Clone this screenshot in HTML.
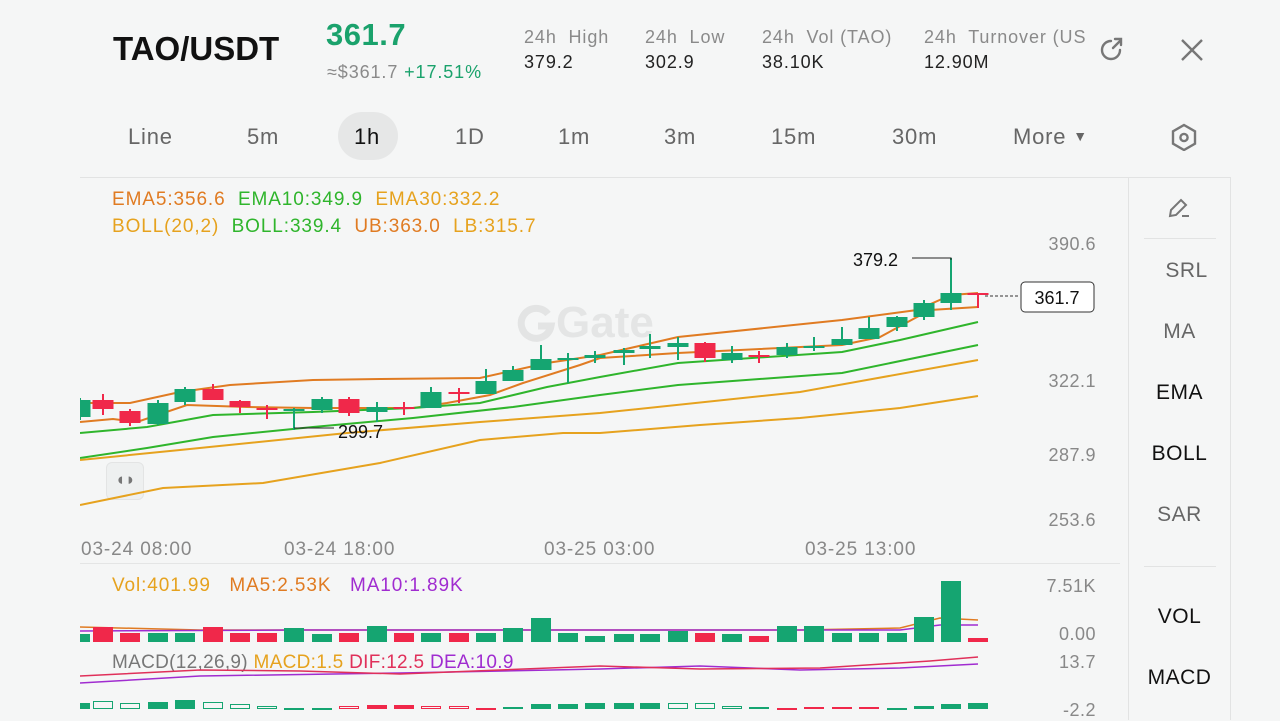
<!DOCTYPE html>
<html><head><meta charset="utf-8"><style>
body{margin:0;width:1280px;height:720px;background:#f5f6f6;font-family:"Liberation Sans",sans-serif;overflow:hidden;position:relative}
.a{position:absolute;white-space:nowrap}
.g{color:#8a8a8a}
.tab{position:absolute;top:124px;font-size:22px;color:#666;letter-spacing:0.8px}
.rl{position:absolute;left:1128px;width:103px;text-align:center;font-size:21px;color:#666;letter-spacing:0.5px}
.ax{position:absolute;right:184px;font-size:18px;color:#888;text-align:right;letter-spacing:0.5px}
.ls{letter-spacing:0.9px}
</style></head><body>
<div class="a" style="left:113px;top:30px;font-size:33px;font-weight:bold;color:#111">TAO/USDT</div>
<div class="a" style="left:326px;top:17px;font-size:31px;font-weight:bold;color:#1aa26c;letter-spacing:0.5px">361.7</div>
<div class="a g ls" style="left:327px;top:62px;font-size:18px">≈$361.7 <span style="color:#1aa26c">+17.51%</span></div>
<div class="a g ls" style="left:524px;top:27px;font-size:18px">24h&nbsp; High</div><div class="a ls" style="left:524px;top:52px;font-size:18px;color:#222">379.2</div>
<div class="a g ls" style="left:645px;top:27px;font-size:18px">24h&nbsp; Low</div><div class="a ls" style="left:645px;top:52px;font-size:18px;color:#222">302.9</div>
<div class="a g ls" style="left:762px;top:27px;font-size:18px">24h&nbsp; Vol (TAO)</div><div class="a ls" style="left:762px;top:52px;font-size:18px;color:#222">38.10K</div>
<div class="a g ls" style="left:924px;top:27px;font-size:18px;width:162px;overflow:hidden">24h&nbsp; Turnover (USDT)</div><div class="a ls" style="left:924px;top:52px;font-size:18px;color:#222">12.90M</div>
<svg class="a" style="left:1098px;top:35px" width="28" height="28" viewBox="0 0 28 28" fill="none" stroke="#777" stroke-width="2.4" stroke-linecap="round"><path d="M22 15a9 9 0 1 1-9-9"/><path d="M15 13L23 5M17 4h6v6"/></svg>
<svg class="a" style="left:1180px;top:38px" width="24" height="24" stroke="#777" stroke-width="2.4"><path d="M2 2L22 22M22 2L2 22"/></svg>

<div class="a" style="left:338px;top:112px;width:60px;height:48px;border-radius:24px;background:#e6e7e7"></div>
<div class="tab" style="left:128px">Line</div><div class="tab" style="left:247px">5m</div><div class="tab" style="left:354px;color:#111">1h</div><div class="tab" style="left:455px">1D</div><div class="tab" style="left:558px">1m</div><div class="tab" style="left:664px">3m</div><div class="tab" style="left:771px">15m</div><div class="tab" style="left:892px">30m</div><div class="tab" style="left:1013px">More <span style="font-size:14px;position:relative;top:-3px">▼</span></div>
<svg class="a" style="left:1170px;top:123px" width="28" height="28" fill="none" stroke="#777" stroke-width="2.4"><path d="M14 2L25 8.3V20.7L14 27L3 20.7V8.3Z"/><circle cx="14" cy="14.5" r="3.6"/></svg>

<div class="a" style="left:80px;top:177px;width:1150px;height:1px;background:#e2e3e3"></div>
<div class="a" style="left:1128px;top:177px;width:1px;height:543px;background:#e2e3e3"></div>
<div class="a" style="left:1230px;top:177px;width:1px;height:543px;background:#e2e3e3"></div>
<div class="a" style="left:1144px;top:238px;width:72px;height:1px;background:#e2e3e3"></div>
<div class="a" style="left:1144px;top:566px;width:72px;height:1px;background:#e2e3e3"></div>
<div class="a" style="left:80px;top:563px;width:1040px;height:1px;background:#e4e5e5"></div>
<svg class="a" style="left:1167px;top:196px" width="26" height="24" fill="none" stroke="#777" stroke-width="2"><path d="M3 20L4 14L14 4L19 9L9 19Z M15 20h7"/></svg>
<div class="rl" style="top:259px;color:#666;left:1135px">SRL</div>
<div class="rl" style="top:320px">MA</div>
<div class="rl" style="top:381px;color:#111">EMA</div>
<div class="rl" style="top:442px;color:#111">BOLL</div>
<div class="rl" style="top:503px">SAR</div>
<div class="rl" style="top:605px;color:#111">VOL</div>
<div class="rl" style="top:666px;color:#111">MACD</div>

<div class="a ls" style="left:112px;top:189px;font-size:19px;color:#e07b22">EMA5:356.6 &nbsp;<span style="color:#2fb52c">EMA10:349.9</span> &nbsp;<span style="color:#e6a21e">EMA30:332.2</span></div>
<div class="a ls" style="left:112px;top:216px;font-size:19px;color:#e6a21e">BOLL(20,2) &nbsp;<span style="color:#2fb52c">BOLL:339.4</span> &nbsp;<span style="color:#e07b22">UB:363.0</span> &nbsp;<span style="color:#e6a21e">LB:315.7</span></div>
<div class="ax" style="top:234px">390.6</div><div class="ax" style="top:371px">322.1</div><div class="ax" style="top:445px">287.9</div><div class="ax" style="top:510px">253.6</div>
<div class="ax" style="top:576px">7.51K</div><div class="ax" style="top:624px">0.00</div><div class="ax" style="top:652px">13.7</div><div class="ax" style="top:700px">-2.2</div>
<div class="a ls" style="left:81px;top:539px;font-size:19px;color:#888">03-24 08:00</div>
<div class="a ls" style="left:284px;top:539px;font-size:19px;color:#888">03-24 18:00</div>
<div class="a ls" style="left:544px;top:539px;font-size:19px;color:#888">03-25 03:00</div>
<div class="a ls" style="left:805px;top:539px;font-size:19px;color:#888">03-25 13:00</div>
<div class="a ls" style="left:112px;top:575px;font-size:19px;color:#e6a21e">Vol:401.99 &nbsp;&nbsp;<span style="color:#e07b22">MA5:2.53K</span> &nbsp;&nbsp;<span style="color:#a02cd0">MA10:1.89K</span></div>
<div class="a" style="left:112px;top:652px;font-size:19px;color:#777;letter-spacing:0.3px">MACD(12,26,9) <span style="color:#e6a21e">MACD:1.5</span> <span style="color:#e0305a">DIF:12.5</span> <span style="color:#a02cd0">DEA:10.9</span></div>
<svg class="a" style="left:516px;top:302px" width="40" height="40" fill="none" stroke="#e3e4e4" stroke-width="7"><path d="M32 12A15 15 0 1 0 35 24H22"/></svg>
<div class="a" style="left:556px;top:298px;font-size:44px;font-weight:bold;color:#e4e5e5">Gate</div>
<div class="a" style="left:106px;top:462px;width:36px;height:36px;border-radius:6px;background:#eef0f0;border:1px solid #e3e4e4"></div>
<div class="a" style="left:115px;top:470px;font-size:17px;color:#777">◖◗</div>

<svg class="a" style="left:0;top:0" width="1280" height="720">
<defs><clipPath id="cp"><rect x="80" y="180" width="1040" height="540"/></clipPath></defs>
<g clip-path="url(#cp)">
<g fill="none" stroke-width="2">
<polyline stroke="#e07b22" points="80,403 130,403 180,392 230,385 313,380 380,379 480,378 547,363 600,355 678,337 842,320 917,310 951,295 978,293"/>
<polyline stroke="#e07b22" points="80,422 113,419 137,422 187,405 247,407 313,408 413,408 447,403 490,395 523,383 580,365 600,358 678,353 842,345 880,337 930,310 978,307"/>
<polyline stroke="#2fb52c" points="80,433 147,427 213,415 313,412 413,408 480,403 547,387 600,377 678,363 842,352 900,340 978,322"/>
<polyline stroke="#2fb52c" points="80,458 147,448 213,437 313,427 413,418 513,407 600,395 678,385 842,373 978,345"/>
<polyline stroke="#e6a21e" points="80,460 180,450 347,433 480,422 600,413 800,392 978,360"/>
<polyline stroke="#e6a21e" points="80,505 163,488 263,483 380,463 480,440 563,433 600,433 700,425 800,418 900,408 978,396"/>
<polyline stroke="#e07b22" stroke-width="1.5" points="80,627 200,630 400,630 600,630 800,630 900,628 940,618 978,620"/>
<polyline stroke="#a02cd0" stroke-width="1.5" points="80,631 300,630 600,630 800,630 900,630 940,625 978,625"/>
<polyline stroke="#a02cd0" stroke-width="1.5" points="80,683 200,676 400,673 600,669 700,666 800,670 900,668 978,664"/>
<polyline stroke="#e0305a" stroke-width="1.5" points="80,676 200,670 300,671 400,674 600,666 700,669 820,668 930,661 978,657"/>
</g>
<g id="c"></g>
</g>
<line x1="985" y1="296" x2="1020" y2="296" stroke="#333" stroke-dasharray="3,2"/>
<rect x="1021" y="282" width="73" height="30" rx="4" fill="#fff" stroke="#333"/>
<text x="1057" y="304" font-size="18" text-anchor="middle" font-family="Liberation Sans" fill="#111">361.7</text>
<polyline points="951,260 951,258 912,258" fill="none" stroke="#222"/>
<text x="853" y="266" font-size="18" font-family="Liberation Sans" fill="#111">379.2</text>
<polyline points="294,428 334,428" stroke="#222"/>
<text x="338" y="438" font-size="18" font-family="Liberation Sans" fill="#111">299.7</text>
</svg>
<script>
var G="#15a571",R="#f0284a";
var d=[[80,G,400,417,398,420],[103,R,400,409,394,415],[130,R,411,423,409,426],[158,G,403,424,400,425],[185,G,389,402,387,405],[213,R,389,400,384,400],[240,R,401,407,400,413],[267,R,408,410,405,419],[294,G,409,411,408,430],[322,G,399,410,397,413],[349,R,399,413,397,416],[377,G,407,412,402,422],[404,R,407,409,402,415],[431,G,392,408,387,408],[459,R,392,394,388,403],[486,G,381,394,369,394],[513,G,370,381,366,381],[541,G,359,370,345,370],[568,G,358,359,353,383],[595,G,355,358,351,363],[624,G,350,353,348,365],[650,G,346,349,334,358],[678,G,343,347,337,360],[705,R,343,358,342,362],[732,G,353,360,346,363],[759,R,355,357,351,363],[787,G,347,355,343,358],[814,G,346,348,337,351],[842,G,339,345,327,345],[869,G,328,339,317,339],[897,G,317,327,316,331],[924,G,303,317,300,320],[951,G,293,303,258,310],[978,R,293,295,293,308]];
var v=[[80,G,634],[103,R,627],[130,R,633],[158,G,633],[185,G,633],[213,R,627],[240,R,633],[267,R,633],[294,G,628],[322,G,634],[349,R,633],[377,G,626],[404,R,633],[431,G,633],[459,R,633],[486,G,633],[513,G,628],[541,G,618],[568,G,633],[595,G,636],[624,G,634],[650,G,634],[678,G,631],[705,R,633],[732,G,634],[759,R,636],[787,G,626],[814,G,626],[842,G,633],[869,G,633],[897,G,633],[924,G,617],[951,G,581],[978,R,638]];
var m=[[80,G,0,6],[103,G,1,8],[130,G,1,6],[158,G,0,7],[185,G,0,9],[213,G,1,7],[240,G,1,5],[267,G,1,3],[294,G,1,1],[322,G,1,1],[349,R,1,3],[377,R,0,4],[404,R,0,4],[431,R,1,3],[459,R,1,3],[486,R,1,1],[513,G,1,2],[541,G,0,5],[568,G,0,5],[595,G,0,6],[624,G,0,6],[650,G,0,6],[678,G,1,6],[705,G,1,6],[732,G,1,3],[759,G,1,2],[787,R,1,1],[814,R,1,2],[842,R,1,2],[869,R,1,2],[897,G,1,1],[924,G,0,3],[951,G,0,5],[978,G,0,6]];
var s="";
d.forEach(function(c){s+='<line x1="'+c[0]+'" x2="'+c[0]+'" y1="'+c[4]+'" y2="'+c[5]+'" stroke="'+c[1]+'" stroke-width="2"/><rect x="'+(c[0]-10.5)+'" y="'+c[2]+'" width="21" height="'+Math.max(2,c[3]-c[2])+'" fill="'+c[1]+'"/>';});
v.forEach(function(c){s+='<rect x="'+(c[0]-10)+'" y="'+c[2]+'" width="20" height="'+(642-c[2])+'" fill="'+c[1]+'"/>';});
m.forEach(function(c){var h=c[3],y=709-h;if(c[2])s+='<rect x="'+(c[0]-9.5)+'" y="'+(y+0.5)+'" width="19" height="'+Math.max(1,h-1)+'" fill="none" stroke="'+c[1]+'"/>';else s+='<rect x="'+(c[0]-10)+'" y="'+y+'" width="20" height="'+h+'" fill="'+c[1]+'"/>';});
document.getElementById("c").innerHTML=s;
</script>
</body></html>
